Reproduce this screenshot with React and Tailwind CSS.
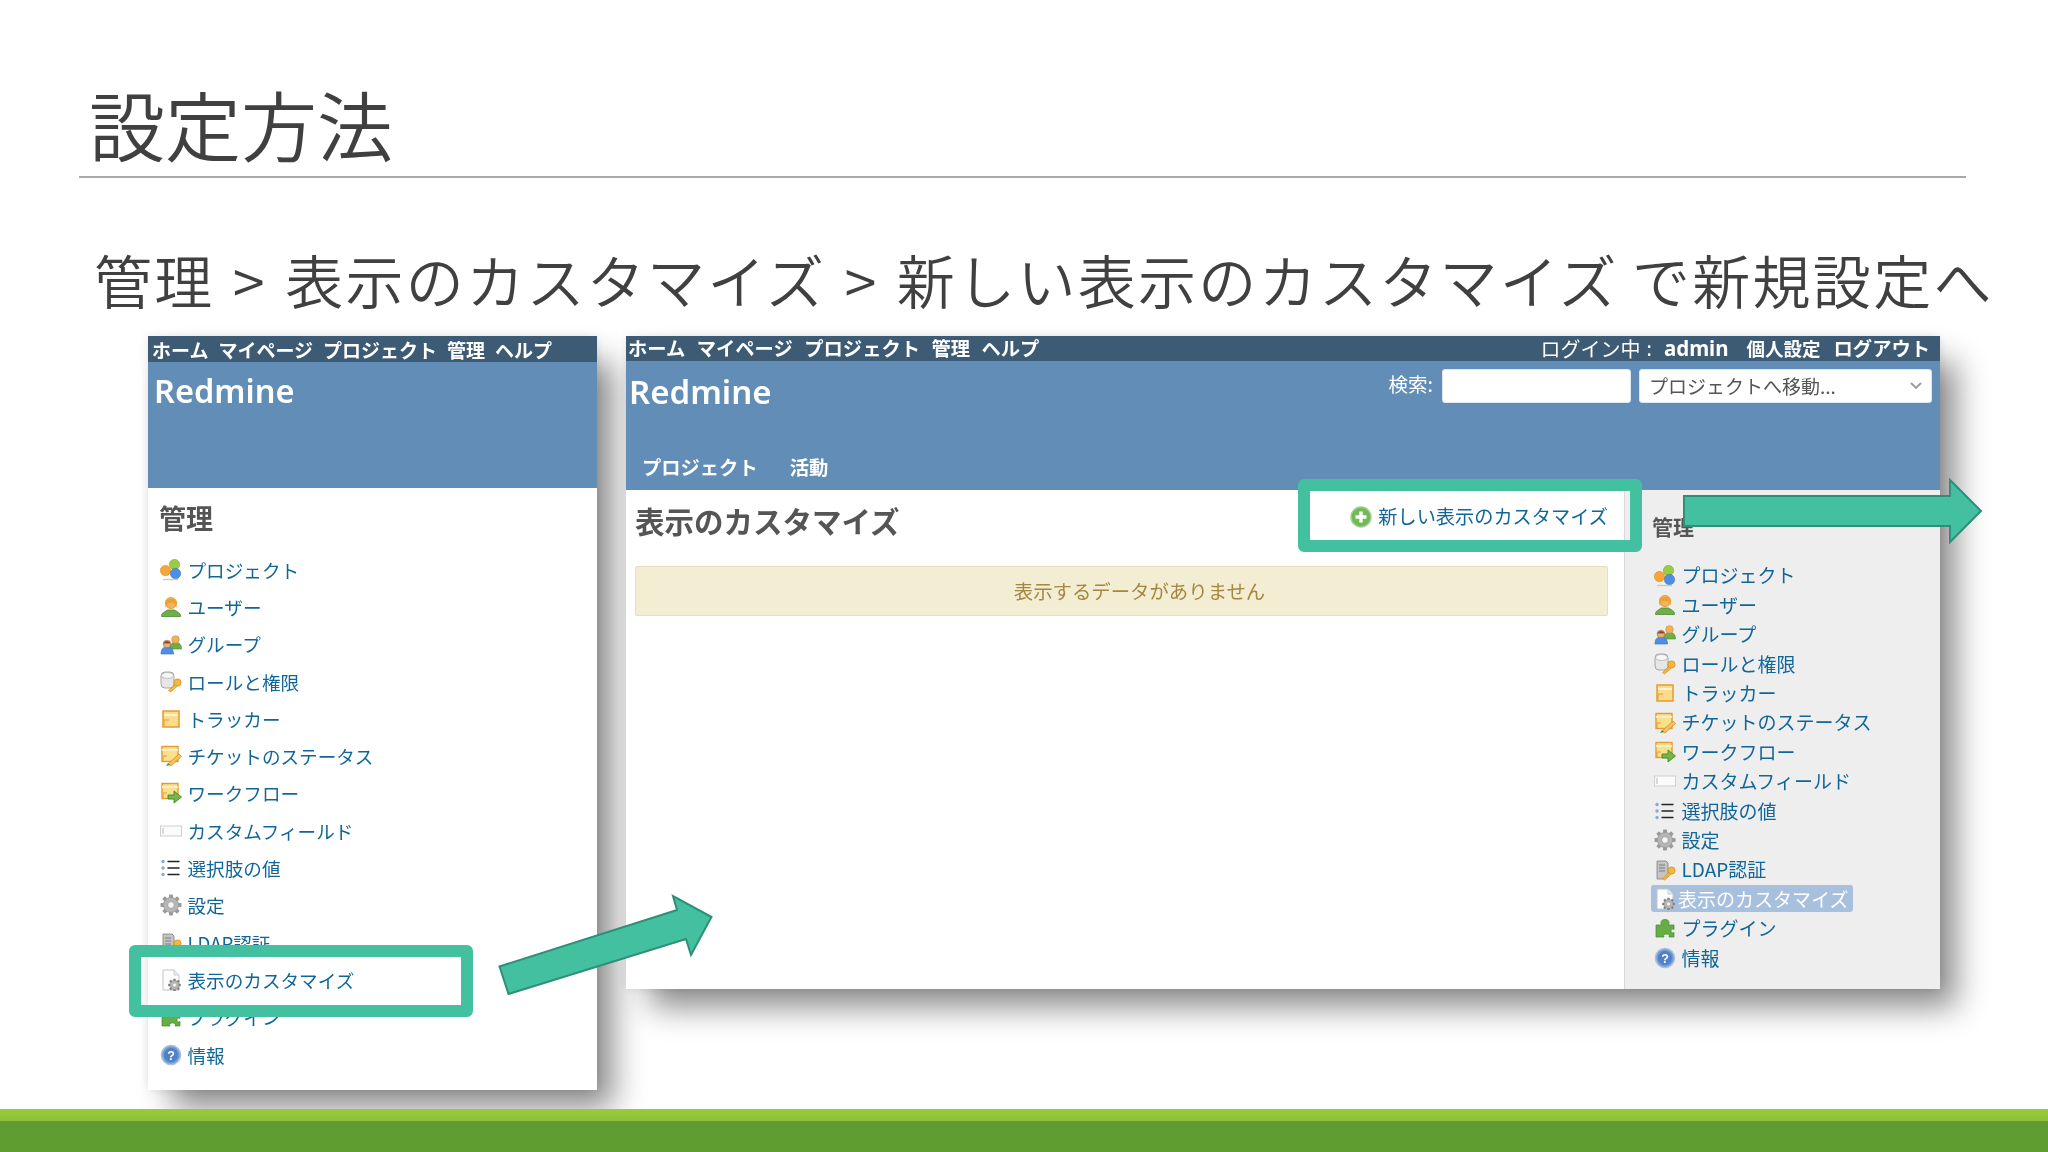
import React from "react";

const Ic = ({ children }) => (
  <svg viewBox="0 0 22 22" className="w-[22px] h-[22px] shrink-0">{children}</svg>
);
const Key = () => (
  <g>
    <circle cx="17.5" cy="11.5" r="3.6" fill="#f2b93b" stroke="#c98a1c" strokeWidth="0.7" />
    <path d="M15 13.5 L8.5 19.5 L10.5 21 L17 15.5Z" fill="#f0b93a" stroke="#c98a1c" strokeWidth="0.6" />
  </g>
);
const Note = () => (
  <g>
    <rect x="2" y="1.5" width="16" height="15" fill="#fbe08a" stroke="#e79a32" strokeWidth="1.4" />
    <path d="M2 5h16" stroke="#f6efc8" strokeWidth="2" />
    <path d="M3 16V11h4" fill="none" stroke="#e79a32" strokeWidth="1" />
  </g>
);
const Gear = ({ cx = 11, cy = 11, s = 1, c = "#9a9a9a" }) => (
  <g transform={`translate(${cx} ${cy}) scale(${s})`}>
    {[0, 45, 90, 135].map((a) => (
      <rect key={a} x="-2" y="-10.5" width="4" height="21" rx="0.8" fill={c} transform={`rotate(${a})`} />
    ))}
    <circle r="7.6" fill="#b6b6b6" stroke={c} strokeWidth="0.8" />
    <circle r="3.4" fill="#f4f4f4" stroke="#8d8d8d" strokeWidth="0.7" />
  </g>
);
const icons = {
  project: (
    <Ic>
      <circle cx="14.5" cy="5.5" r="5.2" fill="#9acb45" stroke="#74a82d" strokeWidth="0.5" />
      <circle cx="5.5" cy="11.5" r="5.2" fill="#f4a63a" stroke="#d98a20" strokeWidth="0.5" />
      <circle cx="15.5" cy="14.5" r="5.2" fill="#4d8fe4" stroke="#336fc0" strokeWidth="0.5" />
      <path d="M3 20.5h15" stroke="#c9c9c9" strokeWidth="1.4" />
    </Ic>
  ),
  user: (
    <Ic>
      <path d="M1.5 20.5c0-2 .5-3 2-4l4-2.5h7l4 2.5c1.5 1 2 2 2 4z" fill="#6fae4c" stroke="#4c8a30" strokeWidth="0.8" />
      <circle cx="11" cy="7" r="5.6" fill="#f2b35d" stroke="#d98d2c" strokeWidth="0.7" />
      <path d="M5.5 6.5C6 1.5 16 1.5 16.5 6.5L16.5 12 14 7H8l-2.5 5z" fill="#eda130" />
    </Ic>
  ),
  group: (
    <Ic>
      <path d="M10 16c0-5 2-6.5 5.5-6.5s6 1.5 6 6.5z" fill="#70ad4a" stroke="#4c8a30" strokeWidth="0.6" />
      <circle cx="15.5" cy="6.5" r="3.8" fill="#efb15c" stroke="#cf8a2c" strokeWidth="0.6" />
      <path d="M1 21c0-5 2-7 6-7s6.5 2 6.5 7z" fill="#4d8fe4" stroke="#336fc0" strokeWidth="0.6" />
      <circle cx="7" cy="11" r="3.8" fill="#e9b285" stroke="#9a5b36" strokeWidth="0.6" />
      <path d="M3.4 10.5c.5-3.5 6.7-3.5 7.2 0z" fill="#8f4b2b" />
    </Ic>
  ),
  role: (
    <Ic>
      <rect x="1" y="1" width="13" height="16" rx="4" fill="#e6e6e6" stroke="#9d9d9d" strokeWidth="0.9" />
      <ellipse cx="7.5" cy="4.5" rx="6" ry="3" fill="#f7f7f7" stroke="#ababab" strokeWidth="0.7" />
      <Key />
    </Ic>
  ),
  tracker: (
    <Ic>
      <rect x="3" y="3" width="16" height="16" fill="#fbdc8a" stroke="#e79a32" strokeWidth="1.5" />
      <path d="M4 7h14" stroke="#fdf3cf" strokeWidth="2" />
      <path d="M4 18v-6h5" fill="none" stroke="#e79a32" strokeWidth="1" />
    </Ic>
  ),
  status: (
    <Ic>
      <Note />
      <path d="M8 19 L19 9 L21.5 11.5 L11 21 Z" fill="#f3c25a" stroke="#c98a1c" strokeWidth="0.7" />
      <path d="M6 21l2-3 2 2z" fill="#4c8a30" />
    </Ic>
  ),
  workflow: (
    <Ic>
      <Note />
      <path d="M8 13h6V9l7.5 6-7.5 6v-4H8z" fill="#76b546" stroke="#3f8a2a" strokeWidth="0.9" />
    </Ic>
  ),
  field: (
    <Ic>
      <rect x="0.5" y="6" width="21" height="10" fill="#fbfbfb" stroke="#cfcfcf" strokeWidth="1" />
      <path d="M3 8v6" stroke="#a3a3a3" strokeWidth="0.8" />
    </Ic>
  ),
  enum: (
    <Ic>
      <circle cx="3" cy="4.5" r="1.7" fill="#89a9dc" />
      <circle cx="3" cy="11" r="1.7" fill="#89a9dc" />
      <circle cx="3" cy="17.5" r="1.7" fill="#89a9dc" />
      <path d="M7.5 4.5h12M7.5 11h12M7.5 17.5h12" stroke="#222" strokeWidth="1.5" />
    </Ic>
  ),
  settings: (
    <Ic>
      <Gear />
    </Ic>
  ),
  ldap: (
    <Ic>
      <path d="M3 2h9l2 2v14l-3 2H3z" fill="#c4c4c4" stroke="#8a8a8a" strokeWidth="0.9" />
      <path d="M5 6h6M5 9h6M5 12h6" stroke="#7d7d7d" strokeWidth="1" />
      <Key />
    </Ic>
  ),
  custom: (
    <Ic>
      <path d="M3 1h11l5 5v15H3z" fill="#fdfdfd" stroke="#c4c4c4" strokeWidth="1" />
      <path d="M14 1v5h5" fill="#e9e9e9" stroke="#c4c4c4" strokeWidth="0.8" />
      <Gear cx={14.5} cy={16} s={0.6} c="#7c7c7c" />
    </Ic>
  ),
  plugin: (
    <Ic>
      <path d="M2 8h5.5c-1-2-1-5.5 3.5-5.5s4.5 3.5 3.5 5.5H20v4.5c-2-1-3-.5-3 1.5s1 2.5 3 1.5V20h-5c1-2 0-3-2.5-3s-3.5 1-2.5 3H2z" fill="#66ad45" stroke="#3f8a2a" strokeWidth="0.7" />
    </Ic>
  ),
  info: (
    <Ic>
      <circle cx="11" cy="11" r="9.5" fill="#6f9ad6" stroke="#a9bfe0" strokeWidth="1.6" />
      <circle cx="11" cy="11" r="7" fill="#4f80c8" />
      <text x="11" y="15.5" textAnchor="middle" fontSize="12.5" fontWeight="700" fontFamily="Liberation Sans, sans-serif" fill="#fff">?</text>
    </Ic>
  ),
};

const items = [
  ["project", "プロジェクト"],
  ["user", "ユーザー"],
  ["group", "グループ"],
  ["role", "ロールと権限"],
  ["tracker", "トラッカー"],
  ["status", "チケットのステータス"],
  ["workflow", "ワークフロー"],
  ["field", "カスタムフィールド"],
  ["enum", "選択肢の値"],
  ["settings", "設定"],
  ["ldap", "LDAP認証"],
  ["custom", "表示のカスタマイズ"],
  ["plugin", "プラグイン"],
  ["info", "情報"],
];

function Arrow({ className, viewBox, points }) {
  return (
    <svg viewBox={viewBox} className={className}>
      <polygon points={points} fill="#43c0a0" stroke="#2f8f78" strokeWidth="2" strokeLinejoin="miter" />
    </svg>
  );
}

export default function App() {
  return (
    <div className="relative w-[2048px] h-[1152px] overflow-hidden bg-white flex flex-col text-[#404040] font-['Noto_Sans_CJK_JP','Noto_Sans',sans-serif]">
      <h1 className="ml-[89px] mt-[80px] h-[94px] text-[76px] leading-[87px] font-[350] whitespace-nowrap">設定方法</h1>
      <div className="ml-[79px] mt-[2px] w-[1887px] h-[2px] bg-[#aaaaaa]" />
      <p className="ml-[94px] mt-[66px] h-[70px] text-[58px] leading-[70px] font-[350] whitespace-nowrap tracking-[2.3px]">
        管理<span className="mx-[3px]"> &gt; </span>表示のカスタマイズ<span className="mx-[3px]"> &gt; </span>新しい表示のカスタマイズ<span className="-ml-[2px]"> で新規設定へ</span>
      </p>
      <div className="ml-[148px] mt-[22px] flex items-start gap-[29px] blur-[0.5px]">
        {/* left capture */}
        <section className="w-[449px] h-[754px] bg-white flex flex-col shrink-0 shadow-[20px_22px_30px_-4px_rgba(0,0,0,0.46),0_0_10px_rgba(0,0,0,0.1)]">
          <div className="h-[26px] bg-[#3e5b76] flex items-center gap-[10px] pl-[4px] text-white font-bold text-[19px] leading-none whitespace-nowrap">
            <span>ホーム</span>
            <span>マイページ</span>
            <span>プロジェクト</span>
            <span>管理</span>
            <span>ヘルプ</span>
          </div>
          <div className="h-[126px] bg-[#628db6] pl-[6px] pt-[13px] font-['Noto_Sans'] font-semibold text-white text-[32.5px] leading-none">
            Redmine
          </div>
          <div className="pl-[12px] pt-[12px]">
            <h2 className="h-[52px] -ml-[1px] text-[27px] leading-[36px] font-bold text-[#555]">管理</h2>
            <ul className="-mt-[1px]">
              {items.map(([k, t]) => (
                <li key={k} className="h-[37.3px] flex items-center gap-[5.5px] text-[18.6px] text-[#116699] whitespace-nowrap">
                  {icons[k]}
                  <span>{t}</span>
                </li>
              ))}
            </ul>
          </div>
        </section>
        {/* right capture */}
        <section className="relative w-[1314px] h-[653px] bg-white flex flex-col shrink-0 shadow-[20px_22px_30px_-4px_rgba(0,0,0,0.46),0_0_10px_rgba(0,0,0,0.1)]">
          <div className="h-[25px] bg-[#3e5b76] flex items-center justify-between pl-[2px] pr-[10px] text-white font-bold text-[19.3px] leading-none whitespace-nowrap">
            <div className="flex gap-[11.5px]">
              <span>ホーム</span>
              <span>マイページ</span>
              <span>プロジェクト</span>
              <span>管理</span>
              <span>ヘルプ</span>
            </div>
            <div className="flex items-center">
              <span className="font-normal text-[20px]">ログイン中</span>
              <span className="font-normal ml-[6px]">:</span>
              <b className="font-['Noto_Sans'] font-bold text-[20.5px] ml-[12px]">admin</b>
              <span className="ml-[18px] text-[18.5px]">個人設定</span>
              <span className="ml-[13px]">ログアウト</span>
            </div>
          </div>
          <div className="h-[129px] bg-[#628db6] flex flex-col justify-between">
            <div className="flex justify-between items-start pl-[3px] pr-[8px] pt-[8px]">
              <div className="pt-[6px] font-['Noto_Sans'] font-semibold text-white text-[33px] leading-none">Redmine</div>
              <div className="flex items-center gap-[8px]">
                <span className="text-white text-[19.5px] leading-none mr-[1px] -mt-[4px]">検索:</span>
                <div className="w-[189px] h-[34px] bg-white rounded-[3px] border border-[#dfe6ee]" />
                <div className="w-[293px] h-[34px] bg-white rounded-[3px] border border-[#dfe6ee] flex items-center justify-between pl-[9px] pr-[9px] text-[19px] text-[#555]">
                  <span>プロジェクトへ移動...</span>
                  <svg viewBox="0 0 12 8" className="w-[12px] h-[8px]">
                    <path d="M1 1l5 5 5-5" fill="none" stroke="#999" strokeWidth="1.8" />
                  </svg>
                </div>
              </div>
            </div>
            <div className="flex gap-[32px] pl-[16px] pb-[13px] text-white font-bold text-[19.3px] leading-none">
              <span>プロジェクト</span>
              <span>活動</span>
            </div>
          </div>
          <div className="flex-1 flex">
            <main className="flex-1 pl-[9px] pr-[16px]">
              <div className="flex items-center justify-between h-[76px]">
                <h2 className="text-[29.5px] font-bold text-[#555] leading-none -mt-[15px]">表示のカスタマイズ</h2>
                <a className="flex items-center gap-[6px] text-[19.2px] text-[#116699] leading-none -mt-[22px]">
                  <svg viewBox="0 0 22 22" className="w-[22px] h-[22px]">
                    <circle cx="11" cy="11" r="10" fill="#74b85a" stroke="#9fd08a" strokeWidth="1.4" />
                    <path d="M11 5.5v11M5.5 11h11" stroke="#fff" strokeWidth="3.4" />
                  </svg>
                  新しい表示のカスタマイズ
                </a>
              </div>
              <div className="h-[50px] pl-[36px] bg-[#f3edd3] border border-[#e4dfc4] rounded-[2px] flex items-center justify-center text-[19.4px] text-[#a5883f]">
                表示するデータがありません
              </div>
            </main>
            <aside className="w-[316px] bg-[#eeeeee] border-l border-[#d8d8d8] pl-[29px] pt-[21px]">
              <h3 className="h-[50px] -ml-[2px] text-[21px] leading-[30px] font-bold text-[#555]">管理</h3>
              <ul>
                {items.map(([k, t]) => (
                  <li key={k} className="h-[29.4px] flex items-center gap-[5.5px] text-[19px] text-[#116699] whitespace-nowrap">
                    {k === "custom" ? (
                      <span className="h-[27px] -ml-[3px] pl-[3px] pr-[5px] bg-[#a6c0de] rounded-[3px] flex items-center gap-[2px] text-white">
                        {icons[k]}
                        {t}
                      </span>
                    ) : (
                      <>
                        {icons[k]}
                        <span>{t}</span>
                      </>
                    )}
                  </li>
                ))}
              </ul>
            </aside>
          </div>
        </section>
      </div>

      {/* footer band */}
      <div className="relative mt-auto h-[43px] bg-[#5f9d31]">
        <div className="h-[12px] bg-gradient-to-b from-[#97cc3a] to-[#8dc038]" />
      </div>

      {/* annotations drawn over the captures */}
      <div className="absolute left-[129px] top-[945px] w-[344px] h-[72px] border-[12.5px] border-[#43c0a0] rounded-[6px]" />
      <div className="absolute left-[1298px] top-[479px] w-[344px] h-[73px] border-[12.5px] border-[#43c0a0] rounded-[6px]" />
      <Arrow
        className="absolute left-[495px] top-[890px] w-[222px] h-[110px]"
        viewBox="495 890 222 110"
        points="499.5,966.5 677,910 673,896 711.5,917 691,955 686,939 508.5,994"
      />
      <Arrow
        className="absolute left-[1680px] top-[476px] w-[304px] h-[70px]"
        viewBox="1680 476 304 70"
        points="1684,496 1950,496 1950,480 1981,511 1950,542 1950,526 1684,526"
      />
    </div>
  );
}
